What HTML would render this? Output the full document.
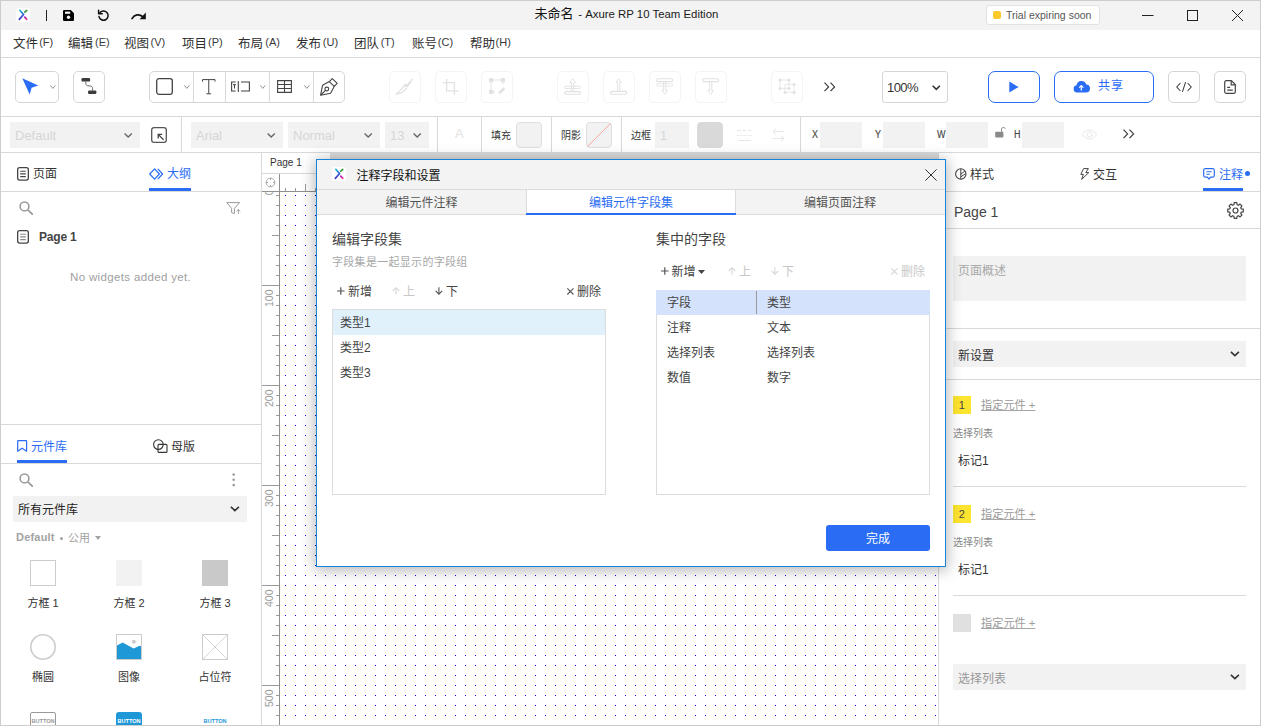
<!DOCTYPE html>
<html lang="zh-CN">
<head>
<meta charset="utf-8">
<title>未命名 - Axure RP 10 Team Edition</title>
<style>
*{box-sizing:border-box;margin:0;padding:0}
html,body{width:1261px;height:726px;overflow:hidden;background:#fff}
body{position:relative;font-family:"Liberation Sans","Noto Sans CJK SC",sans-serif;font-size:12px;color:#333;-webkit-font-smoothing:antialiased}
.abs{position:absolute}
.t{position:absolute;white-space:nowrap;line-height:1}
.hl{position:absolute;height:1px;background:#d9d9d9}
.vl{position:absolute;width:1px;background:#d9d9d9}
svg{position:absolute;overflow:visible}
/* window frame */
#frame{position:absolute;left:0;top:0;width:1261px;height:726px;border:1px solid #cdcdcd;pointer-events:none;z-index:50}
#titlebar{left:1px;top:1px;width:1259px;height:29px;background:#f3f3f3}
/* toolbar buttons */
.tb{position:absolute;top:71px;height:32px;width:32px;border:1px solid #d6d6d6;border-radius:5px;background:#fff}
.tb.dis{border-color:#f4f4f4}
.sel{position:absolute;top:122px;height:26px;background:#f2f2f2;color:#d0d0d0;font-size:13px}
.inp{position:absolute;top:122px;height:26px;width:42px;background:#f2f2f2}
.lab{font-size:10px;color:#333;top:131px}
.st{top:129px;font-size:13px;color:#d6d6d6}
.sw{width:26px;height:26px;top:122px;border:1px solid #dedede;border-radius:4px;background:#f2f2f2}
.lab2{font-size:10px;color:#444;top:129.6px;-webkit-text-stroke:.15px #444;transform:scaleX(.9);transform-origin:0 0}
/* panels */
.tab{font-size:12px;color:#333}
.blue{color:#2a6df4}
.ul{position:absolute;height:3px;background:#2a6df4}
.wl{font-size:11px;color:#333;text-align:center;width:60px}
.bd{width:17.5px;height:17.5px;background:#fde42f;font-size:11px;color:#444;text-align:center;line-height:18px}
.lk{font-size:11.2px;color:#9a9a9a;text-decoration:underline;text-decoration-thickness:1px;text-underline-offset:1px;text-decoration-color:#a6a6a6}
.sm{font-size:10px;color:#888}
/* dialog */
#dlg{position:absolute;left:316px;top:159px;width:630px;height:408px;background:#fff;border:1px solid #1883d7;box-shadow:0 2px 14px 1px rgba(0,0,0,.3);z-index:20}

.gray{color:#c8c8c8 !important}
.row{font-size:12px;color:#444}
.bt{font-size:12px;color:#444}
.bt span{display:inline-block;margin-right:2px}
.m{top:37.5px;font-size:12.5px;color:#2e2e2e}
.m i{font-style:normal;font-size:11px;color:#3a3a3a;position:absolute;top:-.5px}
</style>
</head>
<body>
<!-- ===== title bar ===== -->
<div class="abs" id="titlebar"></div>
<!-- ===== separators ===== -->
<div class="hl" style="left:1px;top:57px;width:1259px"></div>
<div class="hl" style="left:1px;top:116px;width:1259px"></div>
<div class="hl" style="left:1px;top:152px;width:1259px"></div>

<!-- logo -->
<div class="abs" style="left:16px;top:8px;width:14px;height:14px;background:#fff;border-radius:3px"></div>
<svg style="left:16px;top:8px" width="14" height="14" viewBox="0 0 14 14">
  <defs><linearGradient id="lg1" x1="0" y1="0" x2="0" y2="1"><stop offset="0" stop-color="#17b6d6"/><stop offset=".5" stop-color="#3559d6"/><stop offset="1" stop-color="#3f3cc4"/></linearGradient><linearGradient id="lg2" x1="0" y1="0" x2="0" y2="1"><stop offset="0" stop-color="#a022c4"/><stop offset="1" stop-color="#f21f86"/></linearGradient></defs>
  <path d="M3.8 2.3L7.5 6.5L3.3 11.4" fill="none" stroke="url(#lg1)" stroke-width="1.7" stroke-linecap="round" stroke-linejoin="miter"/>
  <path d="M10.7 2.5L8.8 4.1" fill="none" stroke="#3b9b3b" stroke-width="1.7" stroke-linecap="round"/>
  <path d="M8.7 9.1L10.7 11.3" fill="none" stroke="url(#lg2)" stroke-width="1.7" stroke-linecap="round"/>
</svg>
<div class="abs" style="left:46px;top:10px;width:1px;height:11px;background:#222"></div>
<!-- save -->
<svg style="left:63px;top:10px" width="11" height="11" viewBox="0 0 11 11">
  <path d="M1.2 0h6.6L11 3.2v6.6A1.2 1.2 0 0 1 9.800000000000001 11H1.2A1.2 1.2 0 0 1 0 9.8V1.2A1.2 1.2 0 0 1 1.2 0z" fill="#000"/>
  <rect x="2" y="1.6" width="5.2" height="2.2" fill="#f3f3f3"/>
  <circle cx="5.5" cy="7.3" r="1.7" fill="#f3f3f3"/>
</svg>
<!-- undo -->
<svg style="left:97px;top:9px" width="13" height="13" viewBox="0 0 13 13">
  <path d="M2.6 4.2A4.6 4.6 0 1 1 2 7.6" fill="none" stroke="#111" stroke-width="1.5" stroke-linecap="round"/>
  <path d="M1.6 1.2v3.6h3.6" fill="none" stroke="#111" stroke-width="1.5" stroke-linecap="round" stroke-linejoin="round"/>
</svg>
<!-- redo -->
<svg style="left:131px;top:11px" width="16" height="10" viewBox="0 0 16 10">
  <path d="M1 7.6C3.6 3.4 8 2.6 11.8 5.6" fill="none" stroke="#111" stroke-width="1.7" stroke-linecap="round"/>
  <path d="M14.8 1.6v6.6H8.6z" fill="#111"/>
</svg>
<!-- title -->
<div class="t" id="wtitle" style="left:534.5px;top:7px;font-size:13px;color:#111">未命名<span style="font-size:11.4px;color:#1a1a1a;margin-left:1.5px"> - Axure RP 10 Team Edition</span></div>
<!-- trial badge -->
<div class="abs" style="left:986px;top:5px;width:114px;height:20px;background:#fff;border:1px solid #e2e2e2;border-radius:3px"></div>
<div class="abs" style="left:993px;top:11px;width:8px;height:8px;background:#fcc92b;border-radius:2px"></div>
<div class="t" id="trial" style="left:1006px;top:10px;font-size:10.5px;color:#555">Trial expiring soon</div>
<!-- window controls -->
<svg style="left:1142px;top:9px" width="12" height="12" viewBox="0 0 12 12"><path d="M0 6.5h11.5" stroke="#222" stroke-width="1"/></svg>
<svg style="left:1187px;top:10px" width="11" height="11" viewBox="0 0 11 11"><rect x=".5" y=".5" width="10" height="10" fill="none" stroke="#222" stroke-width="1"/></svg>
<svg style="left:1232px;top:10px" width="11" height="11" viewBox="0 0 11 11"><path d="M0 0L11 11M11 0L0 11" stroke="#222" stroke-width="1"/></svg>

<div class="t m" style="left:13px">文件<i style="left:26.2px">(F)</i></div>
<div class="t m" style="left:68px">编辑<i style="left:27.0px">(E)</i></div>
<div class="t m" style="left:124px">视图<i style="left:26.6px">(V)</i></div>
<div class="t m" style="left:182px">项目<i style="left:26.0px">(P)</i></div>
<div class="t m" style="left:238px">布局<i style="left:27.3px">(A)</i></div>
<div class="t m" style="left:296px">发布<i style="left:26.8px">(U)</i></div>
<div class="t m" style="left:354px">团队<i style="left:26.7px">(T)</i></div>
<div class="t m" style="left:412px">账号<i style="left:25.8px">(C)</i></div>
<div class="t m" style="left:470px">帮助<i style="left:25.6px">(H)</i></div>

<!-- select tool -->
<div class="tb" style="left:15px;width:44px"></div>
<svg style="left:22px;top:78px" width="17" height="17" viewBox="0 0 17 17"><path d="M.3 .3L16.2 7.6L9.6 9.8L7.7 16.4z" fill="#2a6df4"/></svg>
<svg class="chv" style="left:50px;top:85px" width="6" height="4" viewBox="0 0 6 4"><path d="M.3 .3L2.8 3.4L5.3 .3" fill="none" stroke="#8a8a8a" stroke-width=".9"/></svg>
<!-- connector -->
<div class="tb" style="left:73px"></div>
<svg style="left:81px;top:78px" width="16" height="16" viewBox="0 0 16 16">
  <rect x=".5" y="0" width="8.6" height="3.6" rx="1.2" fill="#3c3c3c"/>
  <rect x="7" y="12.6" width="8.4" height="3.4" rx="1.2" fill="#3c3c3c"/>
  <path d="M4.8 3.6v1.6c0 2 1.3 2.7 3.2 2.7s3.600000000000001 .5 3.600000000000001 2.6v2.1" fill="none" stroke="#555" stroke-width=".9"/>
</svg>
<!-- shape group -->
<div class="tb" style="left:149px;width:196px"></div>
<div class="vl" style="left:193px;top:72px;height:30px"></div>
<div class="vl" style="left:225px;top:72px;height:30px"></div>
<div class="vl" style="left:269px;top:72px;height:30px"></div>
<div class="vl" style="left:313px;top:72px;height:30px"></div>
<svg style="left:156px;top:78px" width="17" height="17" viewBox="0 0 17 17"><rect x=".7" y=".7" width="15.6" height="15.6" rx="2.2" fill="none" stroke="#444" stroke-width="1.3"/></svg>
<svg style="left:184px;top:85px" width="6" height="4" viewBox="0 0 6 4"><path d="M.3 .3L2.8 3.4L5.3 .3" fill="none" stroke="#8a8a8a" stroke-width=".9"/></svg>
<svg style="left:202px;top:79px" width="14" height="16" viewBox="0 0 14 16"><path d="M.5 2.6V.6H13v2M6.75 .6V14.600000000000001M4.4 14.8h4.7" fill="none" stroke="#444" stroke-width="1"/></svg>
<svg style="left:231px;top:81px" width="19" height="11" viewBox="0 0 19 11">
  <path d="M4.6 1H.6v9h4M7.300000000000001 0v11M10 1h8.4v9H10" fill="none" stroke="#444" stroke-width="1.1"/>
  <path d="M2 3.7h3M3.5 3.7v3.8" fill="none" stroke="#444" stroke-width="1"/>
</svg>
<svg style="left:260px;top:85px" width="6" height="4" viewBox="0 0 6 4"><path d="M.3 .3L2.8 3.4L5.3 .3" fill="none" stroke="#8a8a8a" stroke-width=".9"/></svg>
<svg style="left:277px;top:80px" width="15" height="13" viewBox="0 0 15 13"><path d="M.6 .6h13.8v11.8H.6zM.6 4.5h13.8M.6 8.5h13.8M7.5 .6v11.8" fill="none" stroke="#444" stroke-width="1.1"/></svg>
<svg style="left:304px;top:85px" width="6" height="4" viewBox="0 0 6 4"><path d="M.3 .3L2.8 3.4L5.3 .3" fill="none" stroke="#8a8a8a" stroke-width=".9"/></svg>
<svg style="left:320px;top:78px" width="18" height="18" viewBox="0 0 18 18">
  <path d="M12.3 .6L17.2 5.4L14.2 8.4L9.3 3.6z" fill="none" stroke="#444" stroke-width="1.1" stroke-linejoin="round"/>
  <path d="M9.3 3.6L2.6 7.2L.6 17.2L10.6 15.200000000000001L14.2 8.4" fill="none" stroke="#444" stroke-width="1.1" stroke-linejoin="round"/>
  <circle cx="6.8" cy="11" r="1.9" fill="none" stroke="#444" stroke-width="1.1"/>
  <path d="M.8 17L5.5 12.3" fill="none" stroke="#444" stroke-width="1.1"/>
</svg>
<!-- disabled buttons -->
<div class="tb dis" style="left:389px"></div>
<div class="tb dis" style="left:435px"></div>
<div class="tb dis" style="left:481px"></div>
<div class="tb dis" style="left:557px"></div>
<div class="tb dis" style="left:603px"></div>
<div class="tb dis" style="left:649px"></div>
<div class="tb dis" style="left:695px"></div>
<div class="tb dis" style="left:771px"></div>
<!-- DIS-START -->
<!-- brush -->
<svg style="left:395px;top:78px" width="19" height="17" viewBox="0 0 19 17"><path d="M18 .8L11.6 7.4M16.2 3.4L12.6 8.200000000000001M9.2 5.8L12.8 9.4M10 7.2C7 9.6 5 14.2 .6 16.2C4.6 16 8.6 14.4 11.6 9.8" fill="none" stroke="#e1e1e1" stroke-width="1.2"/><circle cx="10.8" cy="7.6" r="1.6" fill="#e1e1e1"/></svg>
<!-- crop -->
<svg style="left:443px;top:79px" width="16" height="16" viewBox="0 0 16 16"><path d="M0 3.6h11.4v12.4M3.6 0v11.8h12" fill="none" stroke="#e1e1e1" stroke-width="1.3"/></svg>
<!-- edit points -->
<svg style="left:489px;top:78px" width="17" height="17" viewBox="0 0 17 17"><path d="M2 2h12M2 2v12M14 2v4M2 14h4" fill="none" stroke="#e3e3e3" stroke-width="1"/><rect x="0" y="0" width="4.2" height="4.2" rx=".8" fill="#e1e1e1"/><rect x="11.8" y="0" width="4.2" height="4.2" rx=".8" fill="#e1e1e1"/><rect x="0" y="11.8" width="4.2" height="4.2" rx=".8" fill="#e1e1e1"/><path d="M10 13.6L14.4 9.2L16.2 11L11.8 15.4L9.6 15.8z" fill="#e1e1e1"/></svg>
<!-- front -->
<svg style="left:564px;top:78px" width="18" height="18" viewBox="0 0 18 18"><path d="M8.6 .8L5.8 4.4h1.8v9h2.2v-9h1.8z" fill="none" stroke="#e3e3e3" stroke-width="1"/><rect x=".6" y="8.2" width="16" height="2.4" rx="1.2" fill="none" stroke="#e3e3e3" stroke-width="1"/><rect x=".6" y="13.6" width="16" height="2.6" rx="1.2" fill="none" stroke="#e1e1e1" stroke-width="1.1"/></svg>
<!-- forward -->
<svg style="left:610px;top:78px" width="18" height="18" viewBox="0 0 18 18"><path d="M8.6 .8L5.8 4.4h1.8v9h2.2v-9h1.8z" fill="none" stroke="#e3e3e3" stroke-width="1"/><rect x=".6" y="13.4" width="16" height="2.8" rx="1.2" fill="none" stroke="#e1e1e1" stroke-width="1.1"/></svg>
<!-- back -->
<svg style="left:656px;top:78px" width="18" height="18" viewBox="0 0 18 18"><rect x=".6" y=".8" width="16" height="2.8" rx="1.2" fill="none" stroke="#e1e1e1" stroke-width="1.1"/><rect x=".6" y="5.8" width="16" height="2.4" rx="1.2" fill="none" stroke="#e7e7e7" stroke-width="1"/><path d="M7.6 3.6v9H5.8L8.6 16.2L11.4 12.6H9.8v-9" fill="none" stroke="#e3e3e3" stroke-width="1"/></svg>
<!-- backward -->
<svg style="left:702px;top:78px" width="18" height="18" viewBox="0 0 18 18"><rect x=".6" y=".8" width="16" height="2.8" rx="1.2" fill="none" stroke="#e1e1e1" stroke-width="1.1"/><path d="M7.6 3.6v9H5.8L8.6 16.2L11.4 12.6H9.8v-9" fill="none" stroke="#e3e3e3" stroke-width="1"/></svg>
<!-- group -->
<svg style="left:778px;top:78px" width="18" height="17" viewBox="0 0 18 17"><path d="M2 2h9v8.4H2zM7 6.4h9v8H7z" fill="none" stroke="#e5e5e5" stroke-width=".9"/><g fill="#e1e1e1"><circle cx="2" cy="2" r="1.5"/><circle cx="11" cy="2" r="1.5"/><circle cx="2" cy="10.4" r="1.5"/><circle cx="11" cy="10.4" r="1.5"/><circle cx="16" cy="6.4" r="1.5"/><circle cx="7" cy="14.4" r="1.5"/><circle cx="16" cy="14.4" r="1.5"/></g></svg>
<!-- DIS-END -->
<!-- more -->
<svg style="left:824px;top:82px" width="12" height="10" viewBox="0 0 12 10"><path d="M.5 .6L4.6 5L.5 9.2M6.5 .6L10.600000000000001 5L6.5 9.2" fill="none" stroke="#333" stroke-width="1.1"/></svg>
<!-- zoom -->
<div class="tb" style="left:882px;width:66px;border-radius:3px"></div>
<div class="t" id="zoomtxt" style="left:887px;top:81px;font-size:13px;letter-spacing:-.6px;color:#333">100%</div>
<svg style="left:932px;top:85px" width="9" height="6" viewBox="0 0 9 6"><path d="M.7 .8L4.3 4.4L7.9 .8" fill="none" stroke="#333" stroke-width="1.6"/></svg>
<!-- play -->
<div class="tb" style="left:988px;width:52px;border:1.5px solid #2a6df4;border-radius:7px"></div>
<svg style="left:1009px;top:81px" width="10" height="12" viewBox="0 0 10 12"><path d="M.3 .4L9.6 6L.3 11.6z" fill="#2a6df4"/></svg>
<!-- share -->
<div class="tb" style="left:1054px;width:100px;border:1.5px solid #2a6df4;border-radius:7px"></div>
<svg style="left:1073px;top:80px" width="17" height="13" viewBox="0 0 17 13">
  <path d="M4.2 12.6A3.7 3.7 0 0 1 3.5 5.3A5 5 0 0 1 13.2 4.600000000000001A4 4 0 0 1 12.8 12.6z" fill="#2a6df4"/>
  <path d="M8.3 10.4V5.6M6.2 7.6L8.3 5.5L10.4 7.6" fill="none" stroke="#fff" stroke-width="1.2"/>
</svg>
<div class="t" style="left:1098px;top:80px;font-size:12px;letter-spacing:1px;color:#2a6df4">共享</div>
<!-- code -->
<div class="tb" style="left:1168px"></div>
<svg style="left:1176px;top:82px" width="16" height="10" viewBox="0 0 16 10"><path d="M4.4 1L.8 5L4.4 9M11.6 1L15.2 5L11.6 9M9.6 .2L6.4 9.8" fill="none" stroke="#444" stroke-width="1.1"/></svg>
<!-- doc -->
<div class="tb" style="left:1214px"></div>
<svg style="left:1224px;top:80px" width="12" height="14" viewBox="0 0 12 14">
  <path d="M.7 2.200000000000001A1.5 1.5 0 0 1 2.2 .7H7.4L11.3 4.6V11.8A1.5 1.5 0 0 1 9.8 13.3H2.2A1.5 1.5 0 0 1 .7 11.8z" fill="none" stroke="#444" stroke-width="1.2"/>
  <path d="M7.2 .8V4.8H11.2M3.2 7.4h3M3.2 10.2h5.6" fill="none" stroke="#444" stroke-width="1.2"/>
</svg>

<div class="sel" style="left:10px;width:130px"></div>
<div class="t st" style="left:15px">Default</div>
<svg class="c2" style="left:124px;top:133px" width="9" height="5" viewBox="0 0 9 5"><path d="M.6 .6L4.2 4L7.8 .6" fill="none" stroke="#666" stroke-width="1.4"/></svg>
<svg style="left:151px;top:127px" width="16" height="16" viewBox="0 0 16 16"><rect x=".7" y=".7" width="14.6" height="14.6" rx="2.4" fill="none" stroke="#555" stroke-width="1.3"/><path d="M12.6 12.8L7.4 7.6M7.2 11.4V7.4H11.2" fill="none" stroke="#444" stroke-width="1.3"/></svg>
<div class="vl" style="left:181px;top:117px;height:35px"></div>
<div class="sel" style="left:191px;width:92px"></div>
<div class="t st" style="left:196px">Arial</div>
<svg style="left:267px;top:133px" width="9" height="5" viewBox="0 0 9 5"><path d="M.6 .6L4.2 4L7.8 .6" fill="none" stroke="#666" stroke-width="1.4"/></svg>
<div class="sel" style="left:288px;width:92px"></div>
<div class="t st" style="left:293px">Normal</div>
<svg style="left:364px;top:133px" width="9" height="5" viewBox="0 0 9 5"><path d="M.6 .6L4.2 4L7.8 .6" fill="none" stroke="#666" stroke-width="1.4"/></svg>
<div class="sel" style="left:385px;width:44px"></div>
<div class="t st" style="left:390px">13</div>
<svg style="left:413px;top:133px" width="9" height="5" viewBox="0 0 9 5"><path d="M.6 .6L4.2 4L7.8 .6" fill="none" stroke="#666" stroke-width="1.4"/></svg>
<div class="vl" style="left:437px;top:117px;height:35px"></div>
<div class="t" style="left:455px;top:127px;font-size:13px;color:#e2e2e2">A</div>
<div class="vl" style="left:481px;top:117px;height:35px"></div>
<div class="t lab" style="left:491px">填充</div>
<div class="abs sw" style="left:516px"></div>
<div class="vl" style="left:551px;top:117px;height:35px"></div>
<div class="t lab" style="left:561px">阴影</div>
<div class="abs sw" style="left:586px"></div>
<svg style="left:587px;top:123px" width="24" height="24" viewBox="0 0 24 24"><path d="M.5 23.5L23.5 .5" stroke="#f7a5a5" stroke-width="1"/></svg>
<div class="vl" style="left:621px;top:117px;height:35px"></div>
<div class="t lab" style="left:631px">边框</div>
<div class="inp" style="left:655px;width:34px"></div>
<div class="t st" style="left:660px">1</div>
<div class="abs sw" style="left:697px;background:#d9d9d9;border-color:#d9d9d9"></div>
<svg style="left:737px;top:130px" width="15" height="12" viewBox="0 0 15 12"><path d="M0 .5h14.6" stroke="#e6e6e6" stroke-width="1" stroke-dasharray="3.6 1.9"/><path d="M0 5.5h14.6" stroke="#e6e6e6" stroke-width="1" stroke-dasharray="2 1.2"/><path d="M1 10.5h13" stroke="#e6e6e6" stroke-width="1"/></svg>
<svg style="left:772px;top:128px" width="13" height="14" viewBox="0 0 13 14"><path d="M12.5 3.5H1M4 .6L1 3.5L4 6.4M.5 10.5H12M9 7.6L12 10.5L9 13.4" fill="none" stroke="#e6e6e6" stroke-width="1"/></svg>
<div class="vl" style="left:800px;top:117px;height:35px"></div>
<div class="t lab2" style="left:812px">X</div>
<div class="inp" style="left:820px"></div>
<div class="t lab2" style="left:875px">Y</div>
<div class="inp" style="left:883px"></div>
<div class="t lab2" style="left:937px">W</div>
<div class="inp" style="left:946px"></div>
<svg style="left:995px;top:126px" width="11" height="12" viewBox="0 0 11 12"><rect x=".2" y="5.8" width="8.2" height="5.7" rx=".9" fill="#8a8a8a"/><path d="M6.5 5.8V3.2A1.95 1.95 0 0 1 10.3 2.8" fill="none" stroke="#8a8a8a" stroke-width="1"/></svg>
<div class="t lab2" style="left:1014px">H</div>
<div class="inp" style="left:1022px"></div>
<svg style="left:1082px;top:129px" width="15" height="11" viewBox="0 0 15 11"><path d="M.5 5.5C3.5 -.4 11.5 -.4 14.5 5.5C11.5 11.4 3.5 11.4 .5 5.5z" fill="none" stroke="#e8e8e8" stroke-width="1"/><circle cx="7.5" cy="5.5" r="2.5" fill="none" stroke="#e8e8e8" stroke-width="1"/></svg>
<svg style="left:1122.7px;top:129px" width="12" height="10" viewBox="0 0 12 10"><path d="M.5 .6L4.6 5L.5 9.2M6.5 .6L10.600000000000001 5L6.5 9.2" fill="none" stroke="#333" stroke-width="1.1"/></svg>

<div class="vl" style="left:261px;top:153px;height:572px"></div>
<!-- top tabs -->
<svg style="left:17px;top:167px" width="12" height="14" viewBox="0 0 12 14"><rect x=".65" y=".65" width="10.7" height="12.4" rx="2" fill="none" stroke="#444" stroke-width="1.3"/><path d="M3.2 4.2h5.6M3.2 6.9h5.6M3.2 9.6h5.6" stroke="#444" stroke-width="1.1"/></svg>
<div class="t tab" style="left:33px;top:168px">页面</div>
<svg style="left:149px;top:168px" width="14" height="12" viewBox="0 0 14 12"><path d="M5.6 .8L10.4 6L5.6 11.2L.7 6z" fill="none" stroke="#2a6df4" stroke-width="1.2" stroke-linejoin="round"/><path d="M8.8 .8L13.6 6L8.8 11.2" fill="none" stroke="#2a6df4" stroke-width="1.2" stroke-linejoin="round"/></svg>
<div class="t tab blue" style="left:167px;top:168px">大纲</div>
<div class="ul" style="left:149px;top:188px;width:42px"></div>
<div class="hl" style="left:1px;top:191px;width:260px"></div>
<!-- search / filter -->
<svg style="left:19px;top:201px" width="15" height="15" viewBox="0 0 15 15"><circle cx="5.5" cy="5.4" r="4.4" fill="none" stroke="#999" stroke-width="1.6"/><path d="M8.8 8.8L13.8 13.6" stroke="#999" stroke-width="1.7"/></svg>
<svg style="left:226px;top:202px" width="16" height="13" viewBox="0 0 16 13"><path d="M.8 .6H13.6L8.4 6.4V11.6L5.6 10.6V6.4z" fill="none" stroke="#9a9a9a" stroke-width="1" stroke-linejoin="round"/><path d="M12.4 12V7.6M10.6 9.4L12.4 7.5L14.2 9.4" fill="none" stroke="#9a9a9a" stroke-width=".9"/></svg>
<!-- page row -->
<svg style="left:17px;top:230px" width="12" height="14" viewBox="0 0 12 14"><rect x=".65" y=".65" width="10.7" height="12.4" rx="2" fill="none" stroke="#444" stroke-width="1.3"/><path d="M3.2 4.2h5.6M3.2 6.9h5.6M3.2 9.6h5.6" stroke="#8a8a8a" stroke-width="1.1"/></svg>
<div class="t" style="left:39px;top:231px;font-size:12px;font-weight:bold;color:#444;letter-spacing:-.2px">Page 1</div>
<div class="t" style="left:70px;top:272px;font-size:11.5px;color:#a0a0a0;letter-spacing:.35px">No widgets added yet.</div>
<!-- splitter -->
<div class="hl" style="left:1px;top:424px;width:260px"></div>
<!-- bottom tabs -->
<svg style="left:17px;top:440px" width="11" height="12" viewBox="0 0 11 12"><path d="M.7 11.2V1.2A.6 .6 0 0 1 1.3 .6H9A.6 .6 0 0 1 9.6 1.2V11.2L5.1 8.2z" fill="none" stroke="#2a6df4" stroke-width="1.2" stroke-linejoin="round"/></svg>
<div class="t tab blue" style="left:31px;top:441px">元件库</div>
<div class="ul" style="left:17px;top:460px;width:50px"></div>
<svg style="left:153px;top:439px" width="15" height="15" viewBox="0 0 15 15"><circle cx="5.4" cy="5.6" r="4.8" fill="none" stroke="#333" stroke-width="1.1"/><rect x="5" y="5.4" width="9" height="8" rx="1" fill="none" stroke="#333" stroke-width="1.1"/></svg>
<div class="t tab" style="left:171px;top:441px">母版</div>
<div class="hl" style="left:1px;top:463px;width:260px"></div>
<svg style="left:19px;top:473px" width="15" height="15" viewBox="0 0 15 15"><circle cx="5.5" cy="5.4" r="4.4" fill="none" stroke="#999" stroke-width="1.6"/><path d="M8.8 8.8L13.8 13.6" stroke="#999" stroke-width="1.7"/></svg>
<svg style="left:232px;top:473px" width="4" height="14" viewBox="0 0 4 14"><circle cx="1.7" cy="1.5" r="1.3" fill="#9a9a9a"/><circle cx="1.7" cy="6.8" r="1.3" fill="#9a9a9a"/><circle cx="1.7" cy="12.1" r="1.3" fill="#9a9a9a"/></svg>
<div class="abs" style="left:13px;top:496px;width:234px;height:26px;background:#f2f2f2"></div>
<div class="t" style="left:18px;top:504px;font-size:12px;color:#222">所有元件库</div>
<svg style="left:230px;top:506px" width="10" height="6" viewBox="0 0 10 6"><path d="M.9 .8L4.9 4.6L8.9 .8" fill="none" stroke="#333" stroke-width="1.6"/></svg>
<div class="t" style="left:16px;top:532px;font-size:11px;color:#a3a3a3;font-weight:bold;letter-spacing:.2px">Default</div><div class="abs" style="left:60px;top:537px;width:3px;height:3px;border-radius:2px;background:#a3a3a3"></div><div class="t" style="left:68px;top:533px;font-size:11px;color:#a3a3a3">公用</div>
<svg style="left:95px;top:536px" width="6" height="4" viewBox="0 0 6 4"><path d="M0 0H6L3 4z" fill="#a3a3a3"/></svg>
<!-- widgets row 1 -->
<div class="abs" style="left:30px;top:560px;width:26px;height:26px;border:1px solid #ccc;background:#fff"></div>
<div class="abs" style="left:116px;top:560px;width:26px;height:26px;background:#f2f2f2"></div>
<div class="abs" style="left:202px;top:560px;width:26px;height:26px;background:#c9c9c9"></div>
<div class="t wl" style="left:13px;top:598px">方框 1</div>
<div class="t wl" style="left:99px;top:598px">方框 2</div>
<div class="t wl" style="left:185px;top:598px">方框 3</div>
<!-- widgets row 2 -->
<svg style="left:30px;top:634px" width="26" height="26" viewBox="0 0 26 26"><circle cx="13" cy="13" r="12.2" fill="#fff" stroke="#cdcdcd" stroke-width="1.6"/></svg>
<svg style="left:116px;top:634px" width="26" height="26" viewBox="0 0 26 26"><rect x=".5" y=".5" width="25" height="25" fill="#fff" stroke="#ccc"/><path d="M1 11.6L6.6 8.4L17.6 14.6L23.6 11.8L25 12.2V25H1z" fill="#1e98d7"/><circle cx="17.8" cy="7.8" r="2" fill="#ccc"/></svg>
<svg style="left:202px;top:634px" width="26" height="26" viewBox="0 0 26 26"><rect x=".5" y=".5" width="25" height="25" fill="#fff" stroke="#ccc"/><path d="M.5 .5L25.5 25.5M25.5 .5L.5 25.5" stroke="#ccc" stroke-width=".8"/></svg>
<div class="t wl" style="left:13px;top:672px">椭圆</div>
<div class="t wl" style="left:99px;top:672px">图像</div>
<div class="t wl" style="left:185px;top:672px">占位符</div>
<!-- widgets row 3 -->
<svg style="left:30px;top:712px" width="26" height="14" viewBox="0 0 26 14"><rect x=".5" y=".5" width="25" height="18" rx="1.5" fill="#fff" stroke="#999"/><text x="13" y="11" text-anchor="middle" font-family="Liberation Sans,sans-serif" font-size="5.6" font-weight="bold" fill="#999">BUTTON</text></svg>
<svg style="left:116px;top:712px" width="26" height="14" viewBox="0 0 26 14"><rect x="0" y="0" width="26" height="19" rx="3" fill="#1e98d7"/><text x="13" y="11" text-anchor="middle" font-family="Liberation Sans,sans-serif" font-size="5.6" font-weight="bold" fill="#fff">BUTTON</text></svg>
<svg style="left:202px;top:712px" width="26" height="14" viewBox="0 0 26 14"><text x="13" y="11" text-anchor="middle" font-family="Liberation Sans,sans-serif" font-size="5.6" font-weight="bold" fill="#1e98d7">BUTTON</text></svg>

<div class="abs" style="left:262px;top:153px;width:677px;height:20px;background:#dcdcdc"></div>
<div class="abs" style="left:262px;top:153px;width:68px;height:20px;background:#fff"></div>
<div class="t" style="left:270px;top:158px;font-size:10px;color:#333">Page 1</div>
<div class="hl" style="left:262px;top:173px;width:677px"></div>
<div class="abs" style="left:262px;top:174px;width:677px;height:552px;background:#fff"></div>
<svg style="left:262px;top:174px" width="677" height="552" viewBox="262 174 677 552" shape-rendering="crispEdges"><defs><pattern id="dots" x="285" y="195" width="10" height="10" patternUnits="userSpaceOnUse"><rect x="0" y="0" width="1" height="1" fill="#0000ff"/></pattern><clipPath id="vr"><rect x="262" y="192" width="17" height="534"/></clipPath></defs><rect x="280" y="192" width="658" height="533" fill="url(#dots)"/><rect x="262" y="191" width="677" height="1" fill="#8f8f8f"/><rect x="279" y="174" width="1" height="552" fill="#8f8f8f"/><rect x="285" y="188" width="1" height="3" fill="#9a9a9a"/><rect x="295" y="188" width="1" height="3" fill="#9a9a9a"/><rect x="305" y="184" width="1" height="7" fill="#9a9a9a"/><rect x="315" y="188" width="1" height="3" fill="#9a9a9a"/><rect x="325" y="188" width="1" height="3" fill="#9a9a9a"/><rect x="335" y="188" width="1" height="3" fill="#9a9a9a"/><rect x="345" y="188" width="1" height="3" fill="#9a9a9a"/><rect x="355" y="174" width="1" height="17" fill="#9a9a9a"/><rect x="365" y="188" width="1" height="3" fill="#9a9a9a"/><rect x="375" y="188" width="1" height="3" fill="#9a9a9a"/><rect x="385" y="188" width="1" height="3" fill="#9a9a9a"/><rect x="395" y="188" width="1" height="3" fill="#9a9a9a"/><rect x="405" y="184" width="1" height="7" fill="#9a9a9a"/><rect x="415" y="188" width="1" height="3" fill="#9a9a9a"/><rect x="425" y="188" width="1" height="3" fill="#9a9a9a"/><rect x="435" y="188" width="1" height="3" fill="#9a9a9a"/><rect x="445" y="188" width="1" height="3" fill="#9a9a9a"/><rect x="455" y="174" width="1" height="17" fill="#9a9a9a"/><rect x="465" y="188" width="1" height="3" fill="#9a9a9a"/><rect x="475" y="188" width="1" height="3" fill="#9a9a9a"/><rect x="485" y="188" width="1" height="3" fill="#9a9a9a"/><rect x="495" y="188" width="1" height="3" fill="#9a9a9a"/><rect x="505" y="184" width="1" height="7" fill="#9a9a9a"/><rect x="515" y="188" width="1" height="3" fill="#9a9a9a"/><rect x="525" y="188" width="1" height="3" fill="#9a9a9a"/><rect x="535" y="188" width="1" height="3" fill="#9a9a9a"/><rect x="545" y="188" width="1" height="3" fill="#9a9a9a"/><rect x="555" y="174" width="1" height="17" fill="#9a9a9a"/><rect x="565" y="188" width="1" height="3" fill="#9a9a9a"/><rect x="575" y="188" width="1" height="3" fill="#9a9a9a"/><rect x="585" y="188" width="1" height="3" fill="#9a9a9a"/><rect x="595" y="188" width="1" height="3" fill="#9a9a9a"/><rect x="605" y="184" width="1" height="7" fill="#9a9a9a"/><rect x="615" y="188" width="1" height="3" fill="#9a9a9a"/><rect x="625" y="188" width="1" height="3" fill="#9a9a9a"/><rect x="635" y="188" width="1" height="3" fill="#9a9a9a"/><rect x="645" y="188" width="1" height="3" fill="#9a9a9a"/><rect x="655" y="174" width="1" height="17" fill="#9a9a9a"/><rect x="665" y="188" width="1" height="3" fill="#9a9a9a"/><rect x="675" y="188" width="1" height="3" fill="#9a9a9a"/><rect x="685" y="188" width="1" height="3" fill="#9a9a9a"/><rect x="695" y="188" width="1" height="3" fill="#9a9a9a"/><rect x="705" y="184" width="1" height="7" fill="#9a9a9a"/><rect x="715" y="188" width="1" height="3" fill="#9a9a9a"/><rect x="725" y="188" width="1" height="3" fill="#9a9a9a"/><rect x="735" y="188" width="1" height="3" fill="#9a9a9a"/><rect x="745" y="188" width="1" height="3" fill="#9a9a9a"/><rect x="755" y="174" width="1" height="17" fill="#9a9a9a"/><rect x="765" y="188" width="1" height="3" fill="#9a9a9a"/><rect x="775" y="188" width="1" height="3" fill="#9a9a9a"/><rect x="785" y="188" width="1" height="3" fill="#9a9a9a"/><rect x="795" y="188" width="1" height="3" fill="#9a9a9a"/><rect x="805" y="184" width="1" height="7" fill="#9a9a9a"/><rect x="815" y="188" width="1" height="3" fill="#9a9a9a"/><rect x="825" y="188" width="1" height="3" fill="#9a9a9a"/><rect x="835" y="188" width="1" height="3" fill="#9a9a9a"/><rect x="845" y="188" width="1" height="3" fill="#9a9a9a"/><rect x="855" y="174" width="1" height="17" fill="#9a9a9a"/><rect x="865" y="188" width="1" height="3" fill="#9a9a9a"/><rect x="875" y="188" width="1" height="3" fill="#9a9a9a"/><rect x="885" y="188" width="1" height="3" fill="#9a9a9a"/><rect x="895" y="188" width="1" height="3" fill="#9a9a9a"/><rect x="905" y="184" width="1" height="7" fill="#9a9a9a"/><rect x="915" y="188" width="1" height="3" fill="#9a9a9a"/><rect x="925" y="188" width="1" height="3" fill="#9a9a9a"/><rect x="935" y="188" width="1" height="3" fill="#9a9a9a"/><rect x="276" y="195" width="3" height="1" fill="#9a9a9a"/><rect x="276" y="205" width="3" height="1" fill="#9a9a9a"/><rect x="276" y="215" width="3" height="1" fill="#9a9a9a"/><rect x="276" y="225" width="3" height="1" fill="#9a9a9a"/><rect x="272" y="235" width="7" height="1" fill="#9a9a9a"/><rect x="276" y="245" width="3" height="1" fill="#9a9a9a"/><rect x="276" y="255" width="3" height="1" fill="#9a9a9a"/><rect x="276" y="265" width="3" height="1" fill="#9a9a9a"/><rect x="276" y="275" width="3" height="1" fill="#9a9a9a"/><rect x="262" y="285" width="17" height="1" fill="#9a9a9a"/><rect x="276" y="295" width="3" height="1" fill="#9a9a9a"/><rect x="276" y="305" width="3" height="1" fill="#9a9a9a"/><rect x="276" y="315" width="3" height="1" fill="#9a9a9a"/><rect x="276" y="325" width="3" height="1" fill="#9a9a9a"/><rect x="272" y="335" width="7" height="1" fill="#9a9a9a"/><rect x="276" y="345" width="3" height="1" fill="#9a9a9a"/><rect x="276" y="355" width="3" height="1" fill="#9a9a9a"/><rect x="276" y="365" width="3" height="1" fill="#9a9a9a"/><rect x="276" y="375" width="3" height="1" fill="#9a9a9a"/><rect x="262" y="385" width="17" height="1" fill="#9a9a9a"/><rect x="276" y="395" width="3" height="1" fill="#9a9a9a"/><rect x="276" y="405" width="3" height="1" fill="#9a9a9a"/><rect x="276" y="415" width="3" height="1" fill="#9a9a9a"/><rect x="276" y="425" width="3" height="1" fill="#9a9a9a"/><rect x="272" y="435" width="7" height="1" fill="#9a9a9a"/><rect x="276" y="445" width="3" height="1" fill="#9a9a9a"/><rect x="276" y="455" width="3" height="1" fill="#9a9a9a"/><rect x="276" y="465" width="3" height="1" fill="#9a9a9a"/><rect x="276" y="475" width="3" height="1" fill="#9a9a9a"/><rect x="262" y="485" width="17" height="1" fill="#9a9a9a"/><rect x="276" y="495" width="3" height="1" fill="#9a9a9a"/><rect x="276" y="505" width="3" height="1" fill="#9a9a9a"/><rect x="276" y="515" width="3" height="1" fill="#9a9a9a"/><rect x="276" y="525" width="3" height="1" fill="#9a9a9a"/><rect x="272" y="535" width="7" height="1" fill="#9a9a9a"/><rect x="276" y="545" width="3" height="1" fill="#9a9a9a"/><rect x="276" y="555" width="3" height="1" fill="#9a9a9a"/><rect x="276" y="565" width="3" height="1" fill="#9a9a9a"/><rect x="276" y="575" width="3" height="1" fill="#9a9a9a"/><rect x="262" y="585" width="17" height="1" fill="#9a9a9a"/><rect x="276" y="595" width="3" height="1" fill="#9a9a9a"/><rect x="276" y="605" width="3" height="1" fill="#9a9a9a"/><rect x="276" y="615" width="3" height="1" fill="#9a9a9a"/><rect x="276" y="625" width="3" height="1" fill="#9a9a9a"/><rect x="272" y="635" width="7" height="1" fill="#9a9a9a"/><rect x="276" y="645" width="3" height="1" fill="#9a9a9a"/><rect x="276" y="655" width="3" height="1" fill="#9a9a9a"/><rect x="276" y="665" width="3" height="1" fill="#9a9a9a"/><rect x="276" y="675" width="3" height="1" fill="#9a9a9a"/><rect x="262" y="685" width="17" height="1" fill="#9a9a9a"/><rect x="276" y="695" width="3" height="1" fill="#9a9a9a"/><rect x="276" y="705" width="3" height="1" fill="#9a9a9a"/><rect x="276" y="715" width="3" height="1" fill="#9a9a9a"/><g clip-path="url(#vr)" shape-rendering="auto" font-family="Liberation Sans,sans-serif" font-size="10.5" fill="#9a9a9a"><text transform="translate(272.6 189.5) rotate(-90)" text-anchor="end">0</text><text transform="translate(272.6 289.5) rotate(-90)" text-anchor="end">100</text><text transform="translate(272.6 389.5) rotate(-90)" text-anchor="end">200</text><text transform="translate(272.6 489.5) rotate(-90)" text-anchor="end">300</text><text transform="translate(272.6 589.5) rotate(-90)" text-anchor="end">400</text><text transform="translate(272.6 689.5) rotate(-90)" text-anchor="end">500</text></g><g shape-rendering="auto" font-family="Liberation Sans,sans-serif" font-size="10.5" fill="#9a9a9a"><text x="359" y="184">100</text><text x="459" y="184">200</text><text x="559" y="184">300</text><text x="659" y="184">400</text><text x="759" y="184">500</text><text x="859" y="184">600</text></g><g shape-rendering="auto" fill="none" stroke="#aaa" stroke-width="1"><circle cx="270.5" cy="182.5" r="4.4"/><path d="M270.5 178v2M270.5 185v2M266 182.5h2M273 182.5h2"/></g></svg>
<div class="vl" style="left:938px;top:153px;height:572px"></div>

<div class="abs" style="left:939px;top:153px;width:321px;height:572px;background:#fff"></div>
<!-- tabs -->
<svg style="left:955px;top:168px" width="12" height="12" viewBox="0 0 12 12"><circle cx="5.8" cy="6" r="5.2" fill="none" stroke="#444" stroke-width="1.1"/><path d="M5.8 .8V11.2M5.8 6.2L9.8 3.2M5.8 8.8L10.8 5.6" fill="none" stroke="#444" stroke-width="1"/></svg>
<div class="t tab" style="left:970px;top:169px">样式</div>
<svg style="left:1080px;top:168px" width="10" height="12" viewBox="0 0 10 12"><path d="M3.6 .6H8.4L5.8 4.6H8.8L1.6 11.4L3.4 6.4H.8z" fill="none" stroke="#444" stroke-width="1" stroke-linejoin="round"/></svg>
<div class="t tab" style="left:1093px;top:169px">交互</div>
<svg style="left:1203px;top:168px" width="12" height="12" viewBox="0 0 12 12"><path d="M2.2 .7H9.8A1.5 1.5 0 0 1 11.3 2.2V7.6A1.5 1.5 0 0 1 9.8 9.1H7.6L6 11L4.4 9.1H2.2A1.5 1.5 0 0 1 .7 7.6V2.2A1.5 1.5 0 0 1 2.2 .7z" fill="none" stroke="#2a6df4" stroke-width="1.2" stroke-linejoin="round"/><path d="M3.4 3.7h5.2M3.4 6.2h3.4" stroke="#2a6df4" stroke-width="1.1"/></svg>
<div class="t tab blue" style="left:1219px;top:169px">注释</div>
<div class="abs" style="left:1245px;top:171px;width:5px;height:5px;border-radius:3px;background:#2a6df4"></div>
<div class="ul" style="left:1203px;top:188px;width:40px"></div>
<div class="hl" style="left:939px;top:191px;width:321px"></div>
<!-- page title -->
<div class="t" style="left:954px;top:205px;font-size:14px;color:#444">Page 1</div>
<svg style="left:1227px;top:202px" width="17" height="17" viewBox="0 0 17 17"><path d="M6.90 2.72L7.16 0.71L9.84 0.71L10.10 2.72L11.46 3.28L13.06 2.05L14.95 3.94L13.72 5.54L14.28 6.90L16.29 7.16L16.29 9.84L14.28 10.10L13.72 11.46L14.95 13.06L13.06 14.95L11.46 13.72L10.10 14.28L9.84 16.29L7.16 16.29L6.90 14.28L5.54 13.72L3.94 14.95L2.05 13.06L3.28 11.46L2.72 10.10L0.71 9.84L0.71 7.16L2.72 6.90L3.28 5.54L2.05 3.94L3.94 2.05L5.54 3.28z" fill="none" stroke="#444" stroke-width="1.2" stroke-linejoin="round"/><circle cx="8.5" cy="8.5" r="2.5" fill="none" stroke="#444" stroke-width="1.2"/></svg>
<div class="hl" style="left:939px;top:228px;width:321px"></div>
<div class="abs" style="left:953px;top:256px;width:293px;height:45px;background:#f2f2f2"></div>
<div class="t" style="left:958px;top:265px;font-size:12px;color:#a8a8a8">页面概述</div>
<div class="hl" style="left:939px;top:328px;width:321px"></div>
<div class="abs" style="left:953px;top:341px;width:293px;height:26px;background:#f2f2f2"></div>
<div class="t" style="left:958px;top:350px;font-size:12px;color:#333">新设置</div>
<svg style="left:1230px;top:351px" width="10" height="6" viewBox="0 0 10 6"><path d="M.9 .8L4.9 4.6L8.9 .8" fill="none" stroke="#333" stroke-width="1.6"/></svg>
<div class="hl" style="left:939px;top:379px;width:321px"></div>
<!-- item 1 -->
<div class="abs bd" style="left:953px;top:396px">1</div>
<div class="t lk" style="left:981px;top:400px">指定元件 +</div>
<div class="t sm" style="left:953px;top:429px">选择列表</div>
<div class="t" style="left:958px;top:455px;font-size:12px;color:#333">标记1</div>
<div class="hl" style="left:953px;top:486px;width:293px"></div>
<!-- item 2 -->
<div class="abs bd" style="left:953px;top:505px">2</div>
<div class="t lk" style="left:981px;top:509px">指定元件 +</div>
<div class="t sm" style="left:953px;top:538px">选择列表</div>
<div class="t" style="left:958px;top:564px;font-size:12px;color:#333">标记1</div>
<div class="hl" style="left:953px;top:595px;width:293px"></div>
<!-- item 3 -->
<div class="abs bd" style="left:953px;top:614px;background:#e0e0e0"></div>
<div class="t lk" style="left:981px;top:618px">指定元件 +</div>
<div class="abs" style="left:953px;top:664px;width:293px;height:26px;background:#f2f2f2"></div>
<div class="t" style="left:958px;top:673px;font-size:12px;color:#999">选择列表</div>
<svg style="left:1230px;top:674px" width="10" height="6" viewBox="0 0 10 6"><path d="M.9 .8L4.9 4.6L8.9 .8" fill="none" stroke="#333" stroke-width="1.6"/></svg>

<div id="dlg">
<!-- coordinates inside dialog are relative to (317,160) content box -->
<div class="abs" style="left:0;top:0;width:628px;height:29px;background:#f3f3f3"></div>
<div class="abs" style="left:15px;top:7px;width:14px;height:14px;background:#fff;border-radius:3px"></div>
<svg style="left:15px;top:7px" width="14" height="14" viewBox="0 0 14 14">
  <path d="M3.8 2.3L7.5 6.5L3.3 11.4" fill="none" stroke="url(#lg1)" stroke-width="1.7" stroke-linecap="round" stroke-linejoin="miter"/>
  <path d="M10.7 2.5L8.8 4.1" fill="none" stroke="#3b9b3b" stroke-width="1.7" stroke-linecap="round"/>
  <path d="M8.7 9.1L10.7 11.3" fill="none" stroke="url(#lg2)" stroke-width="1.7" stroke-linecap="round"/>
</svg>
<div class="t" style="left:39.5px;top:10px;font-size:12px;color:#111">注释字段和设置</div>
<svg style="left:608px;top:9px" width="12" height="12" viewBox="0 0 12 12"><path d="M.4 .4L11.6 11.6M11.6 .4L.4 11.6" stroke="#333" stroke-width="1"/></svg>
<div class="hl" style="left:0;top:29px;width:628px;background:#dcdcdc"></div>
<!-- tabs -->
<div class="abs" style="left:0;top:30px;width:628px;height:24px;background:#f3f3f3"></div>
<div class="abs" style="left:209px;top:30px;width:210px;height:25px;background:#fff;border-left:1px solid #dcdcdc;border-right:1px solid #dcdcdc"></div>
<div class="hl" style="left:0;top:54px;width:628px;background:#dcdcdc"></div>
<div class="abs" style="left:209px;top:53px;width:210px;height:2px;background:#2a6df4"></div>
<div class="t" style="left:68.5px;top:37px;font-size:12px;color:#555">编辑元件注释</div>
<div class="t" style="left:272px;top:37px;font-size:12px;color:#2a6df4">编辑元件字段集</div>
<div class="t" style="left:487px;top:37px;font-size:12px;color:#555">编辑页面注释</div>
<!-- left column -->
<div class="t" style="left:15px;top:72px;font-size:14px;color:#444">编辑字段集</div>
<div class="t" style="left:15px;top:97px;font-size:11px;color:#a8a8a8;letter-spacing:.3px">字段集是一起显示的字段组</div>
<svg style="left:20px;top:127px" width="8" height="8" viewBox="0 0 8 8"><path d="M0 4h7.6M3.8 .2v7.6" stroke="#555" stroke-width="1.2"/></svg>
<div class="t bt" style="left:31px;top:126px">新增</div>
<svg style="left:75px;top:127px" width="8" height="8" viewBox="0 0 8 8"><path d="M3.9 7.6V.8M.6 4L3.9 .7L7.2 4" fill="none" stroke="#d8d8d8" stroke-width="1.1"/></svg>
<div class="t bt gray" style="left:86px;top:126px">上</div>
<svg style="left:118px;top:127px" width="8" height="8" viewBox="0 0 8 8"><path d="M3.9 .2V7M.6 3.8L3.9 7.1L7.2 3.8" fill="none" stroke="#555" stroke-width="1.1"/></svg>
<div class="t bt" style="left:129px;top:126px">下</div>
<svg style="left:249.5px;top:127.5px" width="7" height="7" viewBox="0 0 7 7"><path d="M.3 .3L6.5 6.5M6.5 .3L.3 6.5" stroke="#555" stroke-width="1.1"/></svg>
<div class="t bt" style="left:260px;top:126px">删除</div>
<div class="abs" style="left:15px;top:149px;width:274px;height:186px;border:1px solid #dcdcdc;background:#fff"></div>
<div class="abs" style="left:16px;top:150px;width:272px;height:25px;background:#e0f1fc"></div>
<div class="t row" style="left:23px;top:157px">类型1</div>
<div class="t row" style="left:23px;top:182px">类型2</div>
<div class="t row" style="left:23px;top:207px">类型3</div>
<!-- right column -->
<div class="t" style="left:339px;top:72px;font-size:14px;color:#444">集中的字段</div>
<svg style="left:344px;top:107px" width="8" height="8" viewBox="0 0 8 8"><path d="M0 4h7.6M3.8 .2v7.6" stroke="#555" stroke-width="1.2"/></svg>
<div class="t bt" style="left:354.5px;top:106px">新增</div>
<svg style="left:381px;top:110px" width="7" height="4" viewBox="0 0 7 4"><path d="M0 0H7L3.5 4z" fill="#444"/></svg>
<svg style="left:411px;top:107px" width="8" height="8" viewBox="0 0 8 8"><path d="M3.9 7.6V.8M.6 4L3.9 .7L7.2 4" fill="none" stroke="#d8d8d8" stroke-width="1.1"/></svg>
<div class="t bt gray" style="left:422px;top:106px">上</div>
<svg style="left:454px;top:107px" width="8" height="8" viewBox="0 0 8 8"><path d="M3.9 .2V7M.6 3.8L3.9 7.1L7.2 3.8" fill="none" stroke="#d8d8d8" stroke-width="1.1"/></svg>
<div class="t bt gray" style="left:465px;top:106px">下</div>
<svg style="left:573.5px;top:107.5px" width="7" height="7" viewBox="0 0 7 7"><path d="M.3 .3L6.5 6.5M6.5 .3L.3 6.5" stroke="#d8d8d8" stroke-width="1.1"/></svg>
<div class="t bt gray" style="left:584px;top:106px">删除</div>
<div class="abs" style="left:339px;top:130px;width:274px;height:205px;border:1px solid #dcdcdc;border-top:none;background:#fff"></div>
<div class="abs" style="left:339px;top:130px;width:274px;height:25px;background:#d4e2fc"></div>
<div class="abs" style="left:439px;top:131px;width:1px;height:23px;background:#9a9a9a"></div>
<div class="t row" style="left:350px;top:137px">字段</div>
<div class="t row" style="left:450px;top:137px">类型</div>
<div class="t row" style="left:350px;top:162px">注释</div>
<div class="t row" style="left:450px;top:162px">文本</div>
<div class="t row" style="left:350px;top:187px">选择列表</div>
<div class="t row" style="left:450px;top:187px">选择列表</div>
<div class="t row" style="left:350px;top:212px">数值</div>
<div class="t row" style="left:450px;top:212px">数字</div>
<!-- done -->
<div class="abs" style="left:509px;top:365px;width:104px;height:26px;background:#2a6df4;border-radius:3px"></div>
<div class="t" style="left:549px;top:373px;font-size:12px;color:#fff !important">完成</div>
</div>


<div id="frame"></div>
</body>
</html>
